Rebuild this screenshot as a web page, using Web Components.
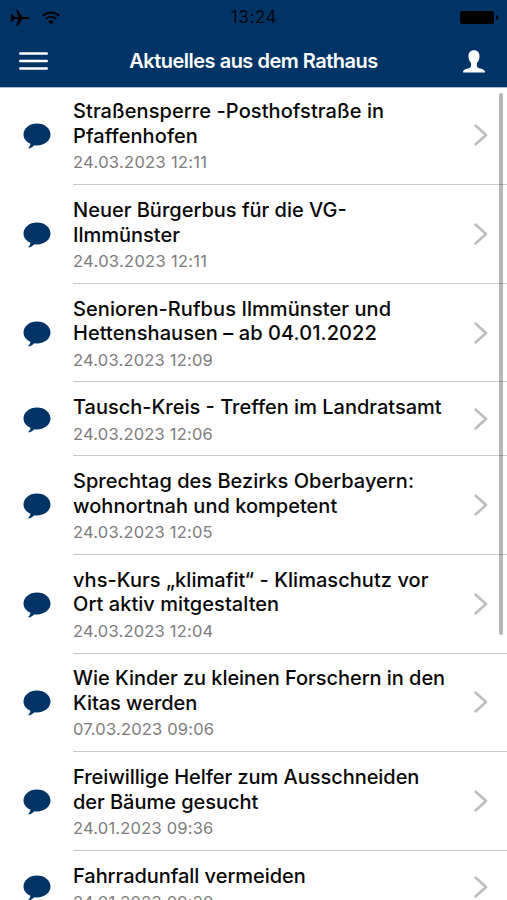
<!DOCTYPE html>
<html lang="de">
<head>
<meta charset="utf-8">
<title>Aktuelles aus dem Rathaus</title>
<style>
html, body {
    margin: 0;
    height: 100%;
    overflow: hidden;
    background: #fff;
    font-family: Inter, "Liberation Sans", sans-serif;
}
</style>
</head>
<body>
<news-screen>
    <status-bar slot="top">13:24</status-bar>
    <nav-bar slot="top">Aktuelles aus dem Rathaus</nav-bar>
    <news-item date="24.03.2023 12:11" style="--title-spacing: 0.08px; --date-spacing: 0.3px">Straßensperre -Posthofstraße in<br>Pfaffenhofen</news-item>
    <news-item date="24.03.2023 12:11" style="--date-spacing: 0.3px">Neuer Bürgerbus für die VG-<br>Ilmmünster</news-item>
    <news-item date="24.03.2023 12:09" style="--title-spacing: 0.07px">Senioren-Rufbus Ilmmünster und<br>Hettenshausen – ab 04.01.2022</news-item>
    <news-item date="24.03.2023 12:06">Tausch-Kreis - Treffen im Landratsamt</news-item>
    <news-item date="24.03.2023 12:05" style="--title-spacing: 0.02px">Sprechtag des Bezirks Oberbayern:<br>wohnortnah und kompetent</news-item>
    <news-item date="24.03.2023 12:04" style="--title-spacing: 0.05px">vhs-Kurs „klimafit“ - Klimaschutz vor<br>Ort aktiv mitgestalten</news-item>
    <news-item date="07.03.2023 09:06" style="--title-spacing: -0.05px">Wie Kinder zu kleinen Forschern in den<br>Kitas werden</news-item>
    <news-item date="24.01.2023 09:36" style="--title-spacing: -0.04px">Freiwillige Helfer zum Ausschneiden<br>der Bäume gesucht</news-item>
    <news-item date="24.01.2023 09:20" style="--title-spacing: -0.04px">Fahrradunfall vermeiden</news-item>
</news-screen>

<script>
class NewsScreen extends HTMLElement {
    constructor() {
        super();
        this.attachShadow({ mode: 'open' });
        this.shadowRoot.innerHTML = `
        <style>
        :host {
            display: flex;
            flex-direction: column;
            height: 100vh;
            overflow: hidden;
        }

        .top {
            flex: none;
            height: 88px;
            background: #003466;
            border-bottom: 1px solid #a9bed4;
            box-sizing: border-box;
        }

        .list {
            position: relative;
            flex: 1;
            min-height: 0;
            overflow: hidden;
            margin-top: -1.400px;
        }

        .scroll-thumb {
            position: absolute;
            top: 6.400px;
            right: 4px;
            width: 4px;
            height: 542px;
            border-radius: 2px;
            background: #00000048;
        }
        </style>
        <div class="top"><slot name="top"></slot></div>
        <div class="list">
            <slot></slot>
            <div class="scroll-thumb"></div>
        </div>
      `;
    }
}

class StatusBar extends HTMLElement {
    constructor() {
        super();
        this.attachShadow({ mode: 'open' });
        this.shadowRoot.innerHTML = `
        <style>
        :host {
            display: grid;
            grid-template-columns: 1fr auto 1fr;
            align-items: center;
            height: 35px;
            padding: 0 8px 0 9px;
            box-sizing: border-box;
            color: #00070e;
            font-size: 17px;
            line-height: 35px;
            letter-spacing: 0.6px;
        }

        .left {
            display: flex;
            align-items: center;
            gap: 12px;
        }

        .battery {
            justify-self: end;
        }

        svg {
            display: block;
            fill: #000;
        }
        </style>
        <div class="left">
            <svg width="21" height="18" viewBox="0 0 20 18"><path d="M1 5h1.200l2.600 3h4L6.600 1h1.500l5 7h4.400c1.600 0 2.500.5 2.500 1s-.9 1-2.500 1h-4.400l-5 7H6.600l2.200-7h-4l-2.600 3H1l1-4z"/></svg>
            <svg width="18" height="16" viewBox="0 0 18 16" style="fill: none; stroke: #000; stroke-width: 1.900"><path d="M.8 5.800c4.600-4.500 11.800-4.500 16.400 0M3.700 9c3-2.900 7.600-2.900 10.600 0"/><path d="M6.200 11.600c1.600-1.500 4-1.500 5.600 0L9 14.700z" fill="#000" stroke="none"/></svg>
        </div>
        <span><slot></slot></span>
        <svg class="battery" width="39" height="15" viewBox="0 0 39 15"><rect x="0" y="1" width="34" height="13" rx="2"/><path d="M36 5c1.700.4 2.500 1.400 2.500 2.500S37.700 9.600 36 10z"/></svg>
      `;
    }
}

class NavBar extends HTMLElement {
    constructor() {
        super();
        this.attachShadow({ mode: 'open' });
        this.shadowRoot.innerHTML = `
        <style>
        :host {
            display: grid;
            grid-template-columns: 60px 1fr 60px;
            align-items: center;
            height: 52px;
            color: #fff;
        }

        .menu {
            margin-left: 19px;
        }

        .user {
            justify-self: end;
            margin-right: 22px;
        }

        .title {
            text-align: center;
            font-size: 20px;
            font-weight: 600;
            letter-spacing: -0.5px;
            white-space: nowrap;
        }

        svg {
            display: block;
        }
        </style>
        <svg class="menu" width="29" height="18" viewBox="0 0 29 18" stroke="#fff" stroke-width="2.400" stroke-linecap="round"><path d="M1.200 1.500h26.600M1.200 9h26.600M1.200 16.500h26.600"/></svg>
        <div class="title"><slot></slot></div>
        <svg class="user" width="22" height="23" viewBox="0 0 22 23" fill="#fff"><path d="M11 .3c3.500 0 5.500 2.300 5.500 5.700 0 2.500-.8 5.200-2.500 6.900-.4 2.600-.2 4.300 1.600 5.100l4 1.300c1.700.6 2.400 1.500 2.400 3.300H0c0-1.800.7-2.700 2.400-3.300l4-1.300c1.800-.8 2-2.500 1.600-5.100C6.300 11.200 5.500 8.500 5.500 6 5.500 2.600 7.500.3 11 .3z"/></svg>
      `;
    }
}

class NewsItem extends HTMLElement {
    constructor() {
        super();
        this.attachShadow({ mode: 'open' });
        this.shadowRoot.innerHTML = `
        <style>
        :host {
            display: flex;
            align-items: stretch;
        }

        .icon {
            flex: none;
            display: flex;
            align-items: center;
            width: 50px;
            padding: 1px 0 0 23px;
        }

        .content {
            flex: 1;
            display: flex;
            align-items: center;
            justify-content: space-between;
            padding: 12.800px 19px 11.800px 0;
            border-bottom: 1px solid #c8c8ca;
        }

        .title {
            color: #080808;
            font-size: 20px;
            font-weight: 500;
            line-height: 24.500px;
            letter-spacing: var(--title-spacing, 0);
            white-space: nowrap;
        }

        .date {
            margin-top: 4px;
            color: #7c7c7c;
            font-size: 16.500px;
            line-height: 20px;
            letter-spacing: var(--date-spacing, 0.2px);
        }

        svg {
            display: block;
            flex: none;
        }

        .chevron {
            margin-bottom: 1px;
        }
        </style>
        <div class="icon">
            <svg width="28" height="26" viewBox="0 0 28 26" fill="#003466"><path d="M14 .5c7.600 0 13.500 4.900 13.500 11S21.600 22.400 14 22.400c-.9 0-1.800-.1-2.600-.2-1.400 1.500-3.400 2.700-5.500 3.200-.5.100-.7-.4-.3-.8 1.100-1 1.800-2.300 1.900-3.800C3.300 19 .5 15.500.5 11.500.5 5.400 6.400.5 14 .5z"/></svg>
        </div>
        <div class="content">
            <div>
                <div class="title"><slot></slot></div>
                <div class="date"></div>
            </div>
            <svg class="chevron" width="15" height="22" viewBox="0 0 15 22" fill="none" stroke="#bdbdbd" stroke-width="2.500" stroke-linecap="round" stroke-linejoin="round"><path d="M2.500 1.500l10.500 9.500-10.500 9.500"/></svg>
        </div>
      `;

        this.date = this.shadowRoot.querySelector('.date');
    }

    connectedCallback() {
        this.date.textContent = this.getAttribute('date');
    }
}

customElements.define('news-screen', NewsScreen);
customElements.define('status-bar', StatusBar);
customElements.define('nav-bar', NavBar);
customElements.define('news-item', NewsItem);
</script>
</body>
</html>
